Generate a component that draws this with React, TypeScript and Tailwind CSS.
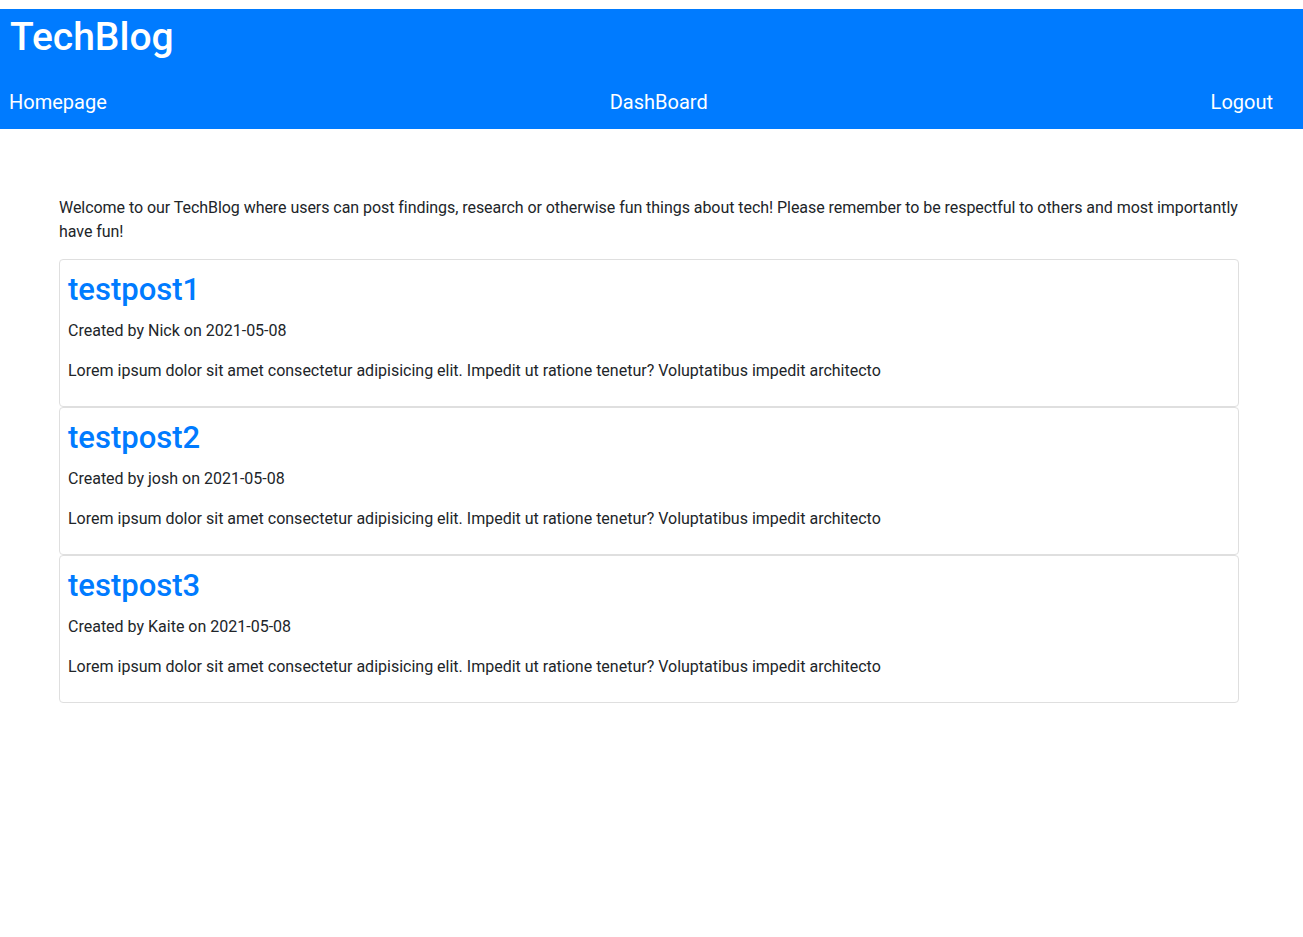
const posts = [
  { id: 1, title: 'testpost1', author: 'Nick', date: '2021-05-08' },
  { id: 2, title: 'testpost2', author: 'josh', date: '2021-05-08' },
  { id: 3, title: 'testpost3', author: 'Kaite', date: '2021-05-08' },
];

const body =
  'Lorem ipsum dolor sit amet consectetur adipisicing elit. Impedit ut ratione tenetur? Voluptatibus impedit architecto';

export default function App() {
  return (
    <div className="min-h-[937px] bg-white pt-[9px] font-['Roboto',sans-serif] text-[16px] text-[#212529]">
      {/* header */}
      <header className="flex h-[120px] flex-col bg-[#007bff] text-white">
        <h1 className="h-[54px] pl-[10px] pt-[4px] text-[39px] font-medium leading-[48px]">TechBlog</h1>
        <nav className="mt-[24px] flex items-center justify-between pl-[9px] pr-[30px] text-[20px] leading-[30px]">
          <a href="#">Homepage</a>
          <a href="#">DashBoard</a>
          <a href="#">Logout</a>
        </nav>
      </header>

      <main className="ml-[59px] mt-[66px] w-[1180px]">
        <p className="mb-[15px] pt-[1px] leading-[24px] tracking-[-0.05px]">
          Welcome to our TechBlog where users can post findings, research or otherwise fun things about tech! Please
          remember to be respectful to others and most importantly have fun!
        </p>

        {posts.map((post) => (
          <article key={post.id} className="rounded-[4px] border border-[#dfdfdf] p-[8px]">
            <h2 className="h-[50px] pt-[3px] text-[31px] font-medium leading-[38px] text-[#007bff]">
              <a href="#">{post.title}</a>
            </h2>
            <p className="mb-[16px] pt-[1px] leading-[24px]">
              Created by {post.author} on {post.date}
            </p>
            <p className="mb-[15px] leading-[24px]">{body}</p>
          </article>
        ))}
      </main>
    </div>
  );
}
